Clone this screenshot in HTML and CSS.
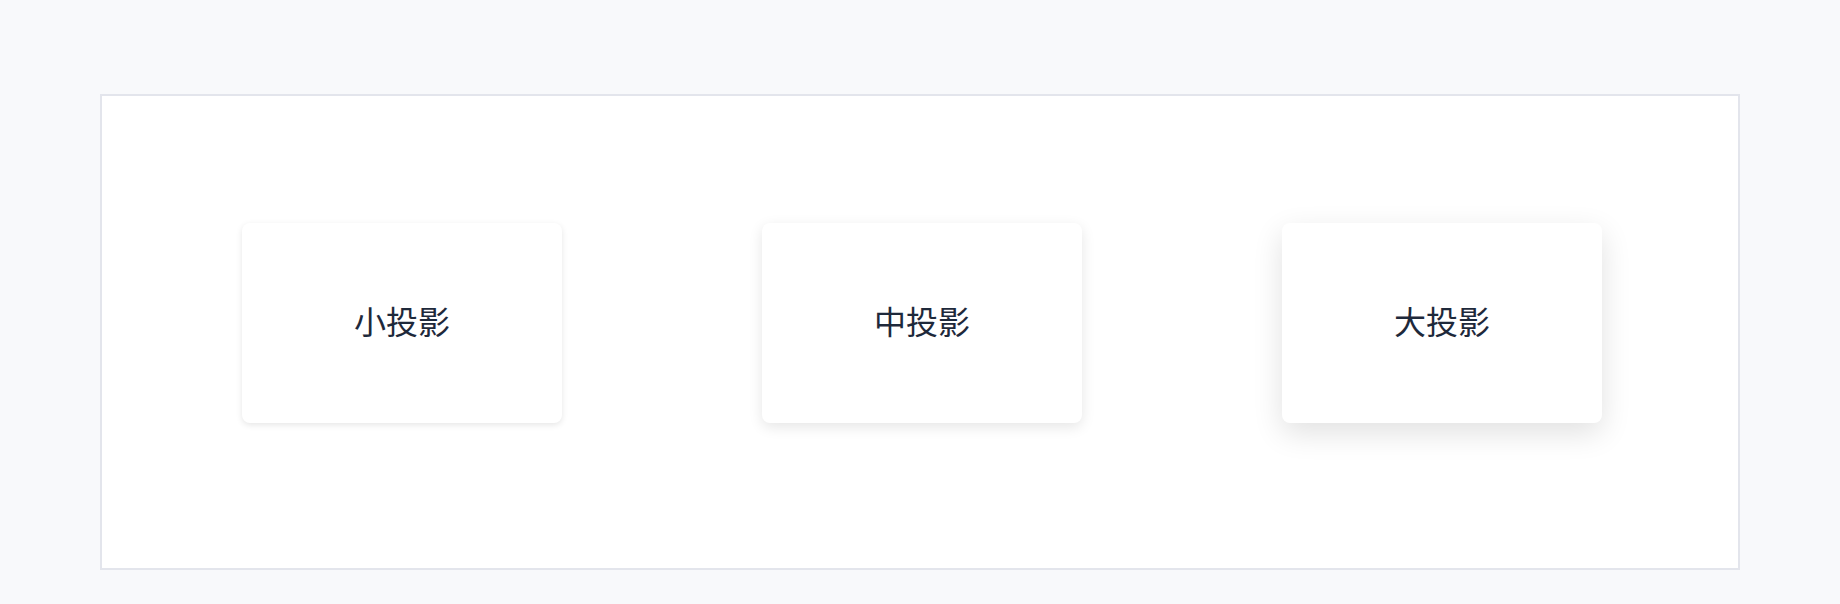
FILE: index.html
```html
<!DOCTYPE html>
<html lang="zh-CN">
<head>
    <meta charset="UTF-8">
    <meta name="viewport" content="width=device-width, initial-scale=1.0">
    <title>投影示例</title>
    <link rel="stylesheet" href="styles.css">
</head>
<body>
    <div class="stage">
        <div class="card shadow-sm">小投影</div>
        <div class="card shadow-md">中投影</div>
        <div class="card shadow-lg">大投影</div>
    </div>
</body>
</html>
```

FILE: styles.css
```css
body {
    margin: 0;
    padding: 94px 100px 35px;
    background: #f8f9fb;
    font-family: "Noto Sans CJK SC", "Noto Sans", sans-serif;
}
.stage {
    display: flex;
    justify-content: center;
    gap: 200px;
    background: white;
    border: 2px solid #e3e5ec;
    padding: 127px 0 145px 4px;
}
.card {
    width: 320px;
    height: 200px;
    box-sizing: border-box;
    padding-bottom: 7px;
    flex-shrink: 0;
    display: flex;
    align-items: center;
    justify-content: center;
    background: white;
    border-radius: 8px;
    color: #1e293b;
    font-size: 32px;
}
.shadow-sm {
    box-shadow: 0 2px 6px rgba(0,0,0,0.1);
}
.shadow-md {
    box-shadow: 0 4px 14px rgba(0,0,0,0.1);
}
.shadow-lg {
    box-shadow: 0 10px 30px rgba(0,0,0,0.12);
}
```
